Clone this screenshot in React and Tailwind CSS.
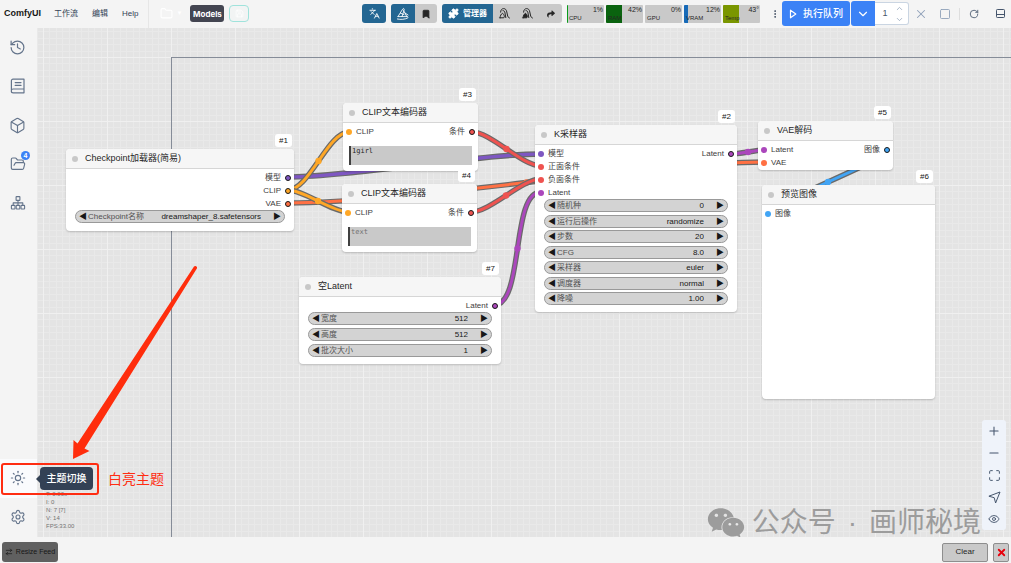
import { useState } from 'react'
import {
  History, Box, FolderOpen, Sun, Settings, Bookmark, Puzzle, Languages, X, Square,
  ChevronDown, ChevronUp, RotateCw, EllipsisVertical, Plus, Minus, Maximize, Eye, Folder, Save, ArrowRightLeft,
} from 'lucide-react'
import { FaWeixin, FaShare } from 'react-icons/fa'

const COLORS = {
  model: '#7e57c2',
  clip: '#ffa726',
  vae: '#ff7043',
  cond: '#ef5350',
  latent: '#ab47bc',
  image: '#42a5f5',
}

// end points are in canvas coordinates
const LINKS = [
  { from: [251, 149], to: [504, 126], type: 'model' },
  { from: [251, 175], to: [728, 134], type: 'vae' },
  { from: [251, 162], to: [312, 104], type: 'clip' },
  { from: [251, 162], to: [311, 184], type: 'clip' },
  { from: [435, 104], to: [504, 138], type: 'cond' },
  { from: [434, 184], to: [504, 151], type: 'cond' },
  { from: [457, 277], to: [504, 164], type: 'latent' },
  { from: [694, 126], to: [728, 122], type: 'latent' },
  { from: [846, 122], to: [736, 186], type: 'image' },
]

const NODES = [
  {
    id: 1, title: 'Checkpoint加载器(简易)', place: 'left-[29px] top-[121px] w-[228px] h-[82px]',
    outputs: [['模型', 'model'], ['CLIP', 'clip'], ['VAE', 'vae']],
    widgets: [{ label: 'Checkpoint名称', value: 'dreamshaper_8.safetensors', combo: true }],
  },
  {
    id: 3, title: 'CLIP文本编码器', place: 'left-[306px] top-[75px] w-[135px] h-[68px]',
    inputs: [['CLIP', 'clip']], outputs: [['条件', 'cond']], text: '1girl',
  },
  {
    id: 4, title: 'CLIP文本编码器', place: 'left-[305px] top-[156px] w-[135px] h-[68px]',
    inputs: [['CLIP', 'clip']], outputs: [['条件', 'cond']], text: '',
  },
  {
    id: 2, title: 'K采样器', place: 'left-[498px] top-[97px] w-[202px] h-[187px]',
    inputs: [['模型', 'model'], ['正面条件', 'cond'], ['负面条件', 'cond'], ['Latent', 'latent']],
    outputs: [['Latent', 'latent']],
    widgets: [
      { label: '随机种', value: '0' },
      { label: '运行后操作', value: 'randomize', combo: true },
      { label: '步数', value: '20' },
      { label: 'CFG', value: '8.0' },
      { label: '采样器', value: 'euler', combo: true },
      { label: '调度器', value: 'normal', combo: true },
      { label: '降噪', value: '1.00' },
    ],
  },
  {
    id: 7, title: '空Latent', place: 'left-[262px] top-[249px] w-[202px] h-[87px]',
    outputs: [['Latent', 'latent']],
    widgets: [
      { label: '宽度', value: '512' },
      { label: '高度', value: '512' },
      { label: '批次大小', value: '1' },
    ],
  },
  {
    id: 5, title: 'VAE解码', place: 'left-[721px] top-[93px] w-[135px] h-[49px]',
    inputs: [['Latent', 'latent'], ['VAE', 'vae']], outputs: [['图像', 'image']],
  },
  {
    id: 6, title: '预览图像', place: 'left-[725px] top-[157px] w-[173px] h-[214px]',
    inputs: [['图像', 'image']],
  },
]

const MONITORS = [
  { name: 'CPU', value: '1%', fill: 1, color: 'bg-[#0a9c1a]' },
  { name: 'RAM', value: '42%', fill: 42, color: 'bg-[#0a630f]' },
  { name: 'GPU', value: '0%', fill: 0, color: 'bg-[#0c86f4]' },
  { name: 'VRAM', value: '12%', fill: 12, color: 'bg-[#176ab8]' },
  { name: 'Temp', value: '43°', fill: 43, color: 'bg-[#7a9600]' },
]

function BookIcon() {
  return (
    <svg width="16" height="16" viewBox="0 0 16 16" fill="none" stroke="currentColor" strokeWidth="1.2" strokeLinejoin="round" strokeLinecap="round">
      <path d="M3 1.2h11v9.8H3.2a1.8 1.8 0 0 0 0 3.8H14M14 11v3.8M1.4 13V2.8A1.6 1.6 0 0 1 3 1.2M5.2 4.6h5.8M5.2 7.4h5.8" />
    </svg>
  )
}

function SitemapIcon() {
  return (
    <svg width="16" height="16" viewBox="0 0 16 16" fill="none" stroke="currentColor" strokeWidth="1.1" strokeLinejoin="round">
      <rect x="6.1" y="1.6" width="3.8" height="3.8" rx=".5" />
      <rect x="1.4" y="10.4" width="3.6" height="3.6" rx=".5" />
      <rect x="6.2" y="10.4" width="3.6" height="3.6" rx=".5" />
      <rect x="11" y="10.4" width="3.6" height="3.6" rx=".5" />
      <path d="M8 5.4v5M3.2 10.4V7.9h9.6v2.5" />
    </svg>
  )
}

function SledIcon() {
  return (
    <svg width="14" height="14" viewBox="0 0 14 14" fill="none" stroke="currentColor" strokeWidth=".9" strokeLinecap="round">
      <path d="M2 9.6 6.6 2.2c1-1.4 2-.4 1.4 1.2L6 9.6M7.6 3.6l3.2 6M1.4 12c3 .7 7.8.6 10.6-1.2M2 9.6h9.5M4.5 6.2 8 7.6M9 6l3 2" />
    </svg>
  )
}

function FreeIcon({ filled }) {
  return (
    <svg width="13" height="13" viewBox="0 0 13 13" fill="none" stroke="currentColor" strokeWidth="1" strokeLinecap="round" strokeLinejoin="round">
      <path d="M2.6 5.2C2.6 2.8 4 1.6 5.6 1.6s2.8 1 3.2 3.4L9.8 9.6l1.7 1.4" />
      <path d="M2 10.8h3.8c1.3-1.2.2-3.3-1.3-4.6C3.2 6.9 2.2 8.7 2 10.8Z" fill={filled ? 'currentColor' : 'none'} />
      <path d="M5 3.6c1.4 0 1.8 1 2 2.4l.8 4.6" />
    </svg>
  )
}

function LocateIcon() {
  return (
    <svg width="13" height="13" viewBox="0 0 13 13" fill="none" stroke="currentColor" strokeWidth="1" strokeLinejoin="round">
      <path d="M12 1 .9 5.2l5.3 1.5 1.4 5.3L12 1Z" />
    </svg>
  )
}

function PlayIcon() {
  return (
    <svg width="8" height="10" viewBox="0 0 8 10" fill="none" stroke="currentColor" strokeWidth="1.2" strokeLinejoin="round">
      <path d="M1.5 1.2v7.6L6.8 5z" />
    </svg>
  )
}

function PanelIcon() {
  return (
    <svg width="11" height="11" viewBox="0 0 11 11" fill="none" stroke="currentColor" strokeWidth="1">
      <rect x="1.5" y="1.5" width="8" height="8" rx=".8" />
      <path d="M1.5 6.5h8" />
    </svg>
  )
}

function TopBar() {
  const [count, setCount] = useState('1')
  const iconButton = 'flex w-5 items-center justify-center'
  return (
    <header className="flex h-7 shrink-0 items-stretch bg-[#f4f4f4] text-[8px] text-[#334155]">
      <div className="flex h-[27px] items-center">
        <h1 className="w-[50px] pl-1 text-[9px] font-bold text-neutral-900">ComfyUI</h1>
        <nav className="flex items-center gap-[14px] pl-1">
          <button>工作流</button>
          <button>编辑</button>
          <button>Help</button>
        </nav>
        <div className="ml-[10px] h-7 w-px bg-[#e6e6e6]" />
        <button className="ml-[11px] flex w-6 items-center gap-[3px] text-white" aria-label="打开">
          <Folder size={13} className="shrink-0" />
          <span className="text-[6px]">▼</span>
        </button>
        <button className="ml-[6px] h-[17px] w-[34px] rounded-[3px] bg-[#434551] font-['Inter',sans-serif] font-bold text-white">Models</button>
        <button className="ml-[5px] flex h-[17px] w-5 items-center justify-center rounded-[4px] border border-[#a0e3dc] bg-[#f2f4f4] text-white" aria-label="保存">
          <Save size={9} />
        </button>
      </div>

      <div className="ml-auto flex h-[27px] items-center gap-[5px]">
        <button className="flex h-[19px] w-6 items-center justify-center rounded-[3px] bg-[#236692] text-white" aria-label="翻译">
          <Languages size={11} />
        </button>
        <div className="flex h-[19px] overflow-hidden rounded-[3px] bg-[#c9c9c9] text-neutral-800">
          <button className="flex w-6 items-center justify-center bg-[#236692] text-white" aria-label="雪橇"><SledIcon /></button>
          <button className="flex w-[22px] items-center justify-center" aria-label="书签"><Bookmark size={10} fill="currentColor" /></button>
        </div>
        <div className="flex h-[19px] overflow-hidden rounded-[3px] bg-[#c9c9c9] text-neutral-800">
          <button className="flex w-[51px] items-center justify-center gap-1 bg-[#236692] font-bold text-white">
            <Puzzle size={11} fill="currentColor" />管理器
          </button>
          <button className="flex w-[23px] items-center justify-center" aria-label="卸载模型"><FreeIcon /></button>
          <button className="flex w-[23px] items-center justify-center" aria-label="清理缓存"><FreeIcon filled /></button>
          <button className="flex w-[23px] items-center justify-center" aria-label="分享"><FaShare size={8} /></button>
        </div>
        <div className="flex gap-[2px]">
          {MONITORS.map((m) => (
            <div key={m.name} className="relative h-[18px] w-[37px] overflow-hidden rounded-[1px] bg-[#c9c9c9] leading-none text-neutral-800">
              <div className={`absolute inset-y-0 left-0 ${m.color}`} style={{ width: `${m.fill}%` }} />
              <span className="absolute bottom-[2px] left-[2px] text-[6px]">{m.name}</span>
              <span className="absolute right-px top-px text-[7px]">{m.value}</span>
            </div>
          ))}
        </div>
        <div className="ml-[3px] flex items-center">
          <button className="flex w-[14px] items-center justify-center" aria-label="更多"><EllipsisVertical size={10} /></button>
          <button className="flex h-[25px] w-[68px] items-center justify-center gap-[6px] rounded-[3px] bg-[#3b82f6] text-[10px] font-medium text-white">
            <PlayIcon />执行队列
          </button>
          <button className="ml-px flex h-[25px] w-6 items-center justify-center rounded-l-[3px] bg-[#3b82f6] text-white" aria-label="队列选项">
            <ChevronDown size={14} />
          </button>
          <div className="flex h-[23px] w-[34px] items-center justify-between rounded-r-[3px] border border-l-0 border-slate-300 bg-white pr-1 text-slate-400">
            <input
              aria-label="批次数量"
              className="w-5 bg-transparent text-center text-[9px] text-slate-600 outline-none"
              value={count}
              onChange={(e) => setCount(e.target.value)}
            />
            <span className="flex flex-col gap-[2px]">
              <button className="block" aria-label="增加" onClick={() => setCount(String(Number(count) + 1))}><ChevronUp size={9} /></button>
              <button className="block" aria-label="减少" onClick={() => setCount(String(Math.max(1, Number(count) - 1)))}><ChevronDown size={9} /></button>
            </span>
          </div>
          <div className="ml-[2px] flex items-center gap-1 text-slate-400">
            <button className={iconButton} aria-label="取消"><X size={14} strokeWidth={1.8} /></button>
            <button className={iconButton} aria-label="清空"><Square size={12} strokeWidth={1.8} /></button>
            <div className="h-3 w-px bg-[#dedede]" />
            <button className={`${iconButton} text-slate-600`} aria-label="刷新"><RotateCw size={10} /></button>
            <button className={`${iconButton} ml-[2px] mr-px text-slate-600`} aria-label="面板"><PanelIcon /></button>
          </div>
        </div>
      </div>
    </header>
  )
}

function SideButton({ label, badge, active, children }) {
  return (
    <button aria-label={label} className={`relative flex h-[39px] w-full items-center justify-center pb-px pr-[2px] ${active ? 'bg-[#fafbfd]' : ''}`}>
      {children}
      {badge && (
        <span className="absolute right-[7px] top-[6px] flex size-[9px] items-center justify-center rounded-full bg-[#3b82f6] text-[7px] font-bold leading-none text-white">
          {badge}
        </span>
      )}
    </button>
  )
}

function SideBar() {
  return (
    <aside className="relative z-20 flex w-[37px] shrink-0 flex-col justify-between bg-[#f4f4f4] text-[#64748b]">
      <div>
        <SideButton label="历史"><History size={17} strokeWidth={1.7} /></SideButton>
        <SideButton label="节点库"><BookIcon /></SideButton>
        <SideButton label="模型库"><Box size={17} strokeWidth={1.6} /></SideButton>
        <SideButton label="工作流" badge="4"><FolderOpen size={16} strokeWidth={1.7} /></SideButton>
        <SideButton label="地图"><SitemapIcon /></SideButton>
      </div>
      <div className="relative">
        <SideButton label="主题切换" active><Sun size={16} strokeWidth={1.7} /></SideButton>
        <SideButton label="设置"><Settings size={16} strokeWidth={1.7} /></SideButton>
        <div className="absolute left-[40px] top-2 flex h-[23px] w-[53px] items-center justify-center rounded-[4px] bg-[#334155] text-[10px] font-medium text-white">
          <svg width="4" height="8" className="absolute right-full" aria-hidden="true"><path d="M4 0v8L0 4z" fill="#334155" /></svg>
          主题切换
        </div>
        <div className="absolute left-px top-1 h-[32px] w-[98px] rounded-[3px] border-2 border-[#ff2d12]" />
        <p className="absolute left-[108px] top-3 whitespace-nowrap text-[14px] leading-4 text-[#ff2d12]">白亮主题</p>
      </div>
    </aside>
  )
}

function linkPath([x1, y1], [x2, y2]) {
  const d = Math.hypot(x2 - x1, y2 - y1) * 0.25
  return `M${x1} ${y1}C${x1 + d} ${y1} ${x2 - d} ${y2} ${x2} ${y2}`
}

function CanvasDrawing() {
  // ten thin cells to every bold one, snapped to whole pixels
  const steps = [6, 13, 19, 26, 32, 38, 45, 51, 58]
  return (
    <svg className="absolute inset-0 size-full" aria-hidden="true">
      <defs>
        <pattern id="grid" x="6" y="29" width="64" height="64" patternUnits="userSpaceOnUse">
          <rect width="64" height="64" fill="#e4e4e4" />
          {steps.map((s) => (
            <path key={s} d={`M${s + 0.5} 0V64M0 ${s + 0.5}H64`} stroke="#e9e9e9" />
          ))}
          <path d="M.5 0V64M0 .5H64" stroke="#f0f0f0" />
        </pattern>
      </defs>
      <rect width="100%" height="100%" fill="url(#grid)" />
      <rect x="134.5" y="29.5" width="3000" height="3000" fill="none" stroke="#858c98" />
      {LINKS.map((l, i) => (
        <g key={i} fill="none">
          <path d={linkPath(l.from, l.to)} stroke="#6a6a6a" strokeWidth="5.4" />
          <path d={linkPath(l.from, l.to)} stroke={COLORS[l.type]} strokeWidth="3" />
          <circle cx={(l.from[0] + l.to[0]) / 2} cy={(l.from[1] + l.to[1]) / 2} r="3.2" fill={COLORS[l.type]} />
        </g>
      ))}
    </svg>
  )
}

function Slot({ name, type, output }) {
  return (
    <div className={`flex h-[13px] items-center gap-1 ${output ? 'flex-row-reverse' : ''}`}>
      <span
        className={`size-[6px] rounded-full ${output ? 'border border-neutral-900' : ''}`}
        style={{ backgroundColor: COLORS[type] }}
      />
      <span>{name}</span>
    </div>
  )
}

function Widget({ id, label, value, combo }) {
  const field = 'min-w-0 flex-1 appearance-none bg-transparent text-right text-neutral-900 outline-none [text-align-last:right]'
  return (
    <div className="flex h-[13px] items-center rounded-full border border-[#999] bg-[#d3d3d3] px-[3px] leading-[11px]">
      <button className="w-[9px] text-left text-[8px] text-neutral-900" aria-label={`${label} -`}>◀</button>
      <label htmlFor={id} className="text-neutral-600">{label}</label>
      {combo ? (
        <select id={id} className={field} defaultValue={value}><option>{value}</option></select>
      ) : (
        <input id={id} className={field} defaultValue={value} />
      )}
      <button className="w-5 text-right text-[8px] text-neutral-900" aria-label={`${label} +`}>▶</button>
    </div>
  )
}

function Node({ id, title, place, inputs = [], outputs = [], widgets, text }) {
  return (
    <section className={`absolute flex flex-col rounded-[4px] bg-white text-[8px] text-neutral-700 shadow-[0_1px_2px_rgba(0,0,0,0.2)] ${place}`}>
      <span className="absolute bottom-full right-[2px] mb-[2px] rounded-[3px] bg-white px-1 text-[8px] leading-[13px] text-neutral-900">#{id}</span>
      <h2 className="flex h-5 shrink-0 items-center gap-[7px] rounded-t-[4px] border-b border-[#d6d6d6] bg-[#f6f6f6] pl-[6px] text-[9px] text-neutral-800">
        <span className="size-[6px] rounded-full bg-[#c8c8c8]" />
        {title}
      </h2>
      <div className="flex justify-between px-[3px] pt-[2px]">
        <div>{inputs.map(([name, type]) => <Slot key={name} name={name} type={type} />)}</div>
        <div>{outputs.map(([name, type]) => <Slot key={name} name={name} type={type} output />)}</div>
      </div>
      {widgets && (
        <div className="flex flex-1 flex-col justify-between px-[9px] pb-[7px]">
          {widgets.map((w) => <Widget key={w.label} id={`${id}-${w.label}`} {...w} />)}
        </div>
      )}
      {text !== undefined && (
        <textarea
          aria-label={title}
          placeholder="text"
          defaultValue={text}
          className="mx-[6px] mb-[6px] mt-auto h-[19px] resize-none overflow-hidden border-l-2 border-neutral-700 bg-[#c9c9c9] pl-px pt-px font-['DejaVu_Sans_Mono',monospace] text-[7px] leading-2 text-neutral-800 outline-none placeholder:text-neutral-500"
        />
      )}
    </section>
  )
}

const TOOLS = [
  { label: '放大', icon: <Plus size={14} strokeWidth={1.8} /> },
  { label: '缩小', icon: <Minus size={14} strokeWidth={1.8} /> },
  { label: '适应视图', icon: <Maximize size={13} strokeWidth={1.8} /> },
  { label: '选择', icon: <LocateIcon /> },
  { label: '显示连线', icon: <Eye size={12} strokeWidth={1.8} /> },
]

function CanvasTools() {
  return (
    <div className="absolute bottom-[7px] right-[5px] flex w-6 flex-col rounded-[3px] bg-[#eff3fa] text-slate-600">
      {TOOLS.map(({ label, icon }) => (
        <button key={label} aria-label={label} className="flex h-[22px] items-center justify-center">{icon}</button>
      ))}
    </div>
  )
}

export default function App() {
  return (
    <div className="flex h-screen flex-col overflow-hidden bg-[#f4f4f4] font-['Liberation_Sans','Noto_Sans_CJK_SC',sans-serif]">
      <TopBar />
      <div className="flex min-h-0 flex-1">
        <SideBar />
        <main className="relative min-w-0 flex-1 overflow-hidden bg-[#e4e4e4]">
          <CanvasDrawing />
          {NODES.map((n) => <Node key={n.id} {...n} />)}

          <div className="absolute bottom-[7px] left-[9px] text-[6px] leading-2 text-neutral-500">
            <p>T: 0.00s</p>
            <p>I: 0</p>
            <p>N: 7 [7]</p>
            <p>V: 14</p>
            <p>FPS:33.00</p>
          </div>

          {/* pointer towards the theme switch */}
          <svg className="absolute left-0 top-0" width="180" height="450" aria-hidden="true">
            <path d="M157 238.5a1.800 1.800 0 0 1 3 1.800L47.500 420.500l5 2.500L36 431l.5-19 4 3.500z" fill="#ff2d0c" />
          </svg>

          <div className="absolute bottom-0 right-[30px] flex items-center gap-[7px] whitespace-nowrap text-[28px] leading-7 text-[#9c9c9c]">
            <FaWeixin size={38} className="-my-2" />
            <p className="flex gap-3">
              <span>公众号</span>
              <span>·</span>
              <span>画师秘境</span>
            </p>
          </div>
          <CanvasTools />
        </main>
      </div>
      <footer className="flex h-[26px] shrink-0 items-center justify-between px-[2px] pt-[4px] text-[8px]">
        <button className="flex h-5 w-14 items-center justify-center gap-[3px] rounded-[3px] bg-[#606060] text-[7px] text-neutral-900">
          <ArrowRightLeft size={8} />Resize Feed
        </button>
        <div className="flex gap-[5px]">
          <button className="h-[19px] w-[46px] rounded-[2px] border border-[#8e8e8e] bg-[#c9c9c9] text-neutral-800">Clear</button>
          <button className="flex h-[19px] w-4 items-center justify-center rounded-[2px] border border-[#8e8e8e] bg-[#c9c9c9] text-red-600" aria-label="关闭">
            <X size={11} strokeWidth={4} />
          </button>
        </div>
      </footer>
    </div>
  )
}
